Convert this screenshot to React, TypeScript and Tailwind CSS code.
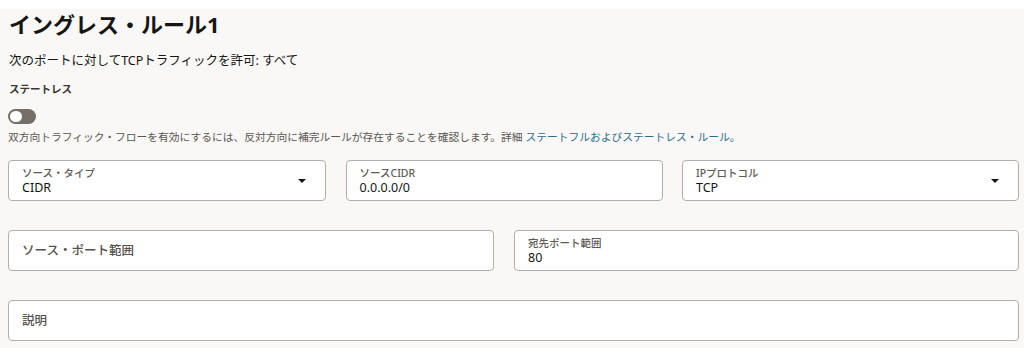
const font = { fontFamily: '"Noto Sans", "Noto Sans CJK JP", sans-serif' };

const Caret = () => (
  <svg width="8" height="4" viewBox="0 0 8 4" className="shrink-0">
    <path d="M0 0 H8 L4 4 Z" fill="#161513" />
  </svg>
);

interface FieldProps {
  label: string;
  value?: string;
  select?: boolean;
}

// Field with a floating label on top when it holds a value, placeholder otherwise
const Field = ({ label, value, select }: FieldProps) => (
  <div className="flex h-[41px] items-center rounded-[4px] border border-[#b3aea9] bg-white pl-[13px] pr-[19px]">
    {value !== undefined ? (
      <div className="flex-1 pt-[1px]">
        <div className="text-[10.5px] leading-[13px] font-medium text-[#5f5a55]">{label}</div>
        <div className="text-[12.5px] leading-[15px] text-[#161513]">{value}</div>
      </div>
    ) : (
      <div className="flex-1 text-[12.5px] leading-[15px] font-medium text-[#56514c]">{label}</div>
    )}
    {select && <Caret />}
  </div>
);

export default function App() {
  return (
    <div className="h-[348px] w-[1024px] overflow-hidden bg-white pt-[6px]" style={font}>
      <div className="h-full bg-[#f9f8f6] pl-[8px] pr-[5px]">
        {/* Header */}
        <h1 className="mt-[3px] pl-[1px] text-[22px] leading-[30px] font-bold text-[#161513]">
          イングレス・ルール1
        </h1>
        <p className="mt-[12px] pl-[1px] text-[12.5px] leading-[20px] text-[#161513]">
          次のポートに対してTCPトラフィックを許可: すべて
        </p>

        {/* Stateless toggle */}
        <div className="mt-[10px] pl-[1px] text-[10.5px] leading-[16px] font-semibold text-[#3a3632]">
          ステートレス
        </div>
        <div className="mt-[12px] flex h-[15px] w-[28px] items-center rounded-full bg-[#756e69] px-[2px]">
          <div className="h-[11px] w-[12px] rounded-full bg-white" />
        </div>
        <p className="mt-[6px] text-[10.75px] leading-[14px] text-[#5a5652]">
          双方向トラフィック・フローを有効にするには、反対方向に補完ルールが存在することを確認します。詳細{' '}
          <a className="text-[#2b6c8c]">ステートフルおよびステートレス・ルール。</a>
        </p>

        {/* Fields */}
        <div className="mt-[16px] grid grid-cols-[318px_317px_1fr] gap-x-[19.5px]">
          <Field label="ソース・タイプ" value="CIDR" select />
          <Field label="ソースCIDR" value="0.0.0.0/0" />
          <Field label="IPプロトコル" value="TCP" select />
        </div>
        <div className="mt-[29px] grid grid-cols-[486px_1fr] gap-x-5">
          <Field label="ソース・ポート範囲" />
          <Field label="宛先ポート範囲" value="80" />
        </div>
        <div className="mt-[29px]">
          <Field label="説明" />
        </div>
      </div>
    </div>
  );
}
